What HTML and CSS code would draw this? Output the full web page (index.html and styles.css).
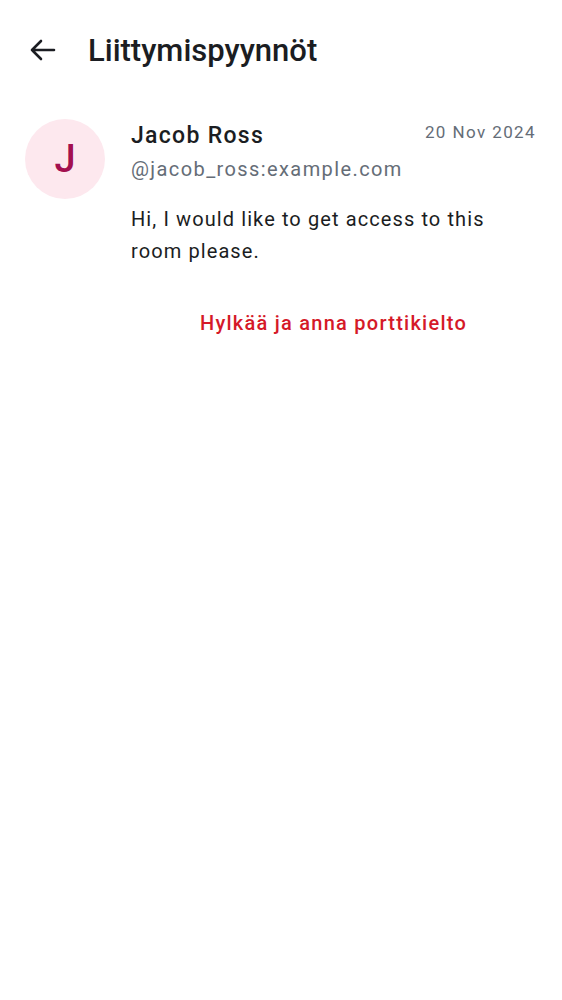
FILE: index.html
```html
<!DOCTYPE html>
<html>
<head>
<meta charset="utf-8">
<link rel="stylesheet" href="styles.css">
</head>
<body>
<header class="topbar">
  <button class="back" aria-label="Back">
    <svg width="30" height="30" viewBox="0 0 30 30"><path d="M26 15H4M4 15l9-9M4 15l9 9" fill="none" stroke="#1b1d22" stroke-width="2.6" stroke-linecap="round" stroke-linejoin="round"/></svg>
  </button>
  <h1 class="title">Liittymispyynnöt</h1>
</header>
<main class="request">
  <div class="avatar">J</div>
  <div class="content">
    <div class="head">
      <div class="names">
        <div class="name">Jacob Ross</div>
        <div class="handle">@jacob_ross:example.com</div>
      </div>
      <div class="date">20 Nov 2024</div>
    </div>
    <p class="message">Hi, I would like to get access to this room please.</p>
    <div class="actions"><button class="ban">Hylkää ja anna porttikielto</button></div>
  </div>
</main>
</body>
</html>
```
FILE: styles.css
```css
html, body { margin: 0; padding: 0; background: #fff; }
body { font-family: Roboto, "Noto Sans", sans-serif; color: #1b1d22; }
.topbar { display: flex; align-items: center; height: 100px; padding-left: 28px; }
.back { background: none; border: 0; padding: 0; width: 30px; height: 30px; display: flex; }
.title { margin: 0 0 0 30px; font-size: 31px; font-weight: 500; letter-spacing: 0; }
.request { display: flex; padding: 19px 26px 0 25px; gap: 26px; }
.avatar { flex: none; width: 80px; height: 80px; border-radius: 50%; background: #fde8ee; color: #a3104f; font-size: 38px; font-weight: 500; display: flex; align-items: center; justify-content: center; }
.content { flex: 1; }
.head { display: flex; justify-content: space-between; align-items: flex-start; }
.name { font-size: 23px; font-weight: 500; line-height: 32px; letter-spacing: 1.3px; margin-top: 1px; }
.handle { font-size: 20px; color: #656d77; line-height: 32px; margin-top: 1px; letter-spacing: 1.4px; }
.date { font-size: 17px; color: #656d77; line-height: 24px; padding-top: 1px; letter-spacing: 1.4px; }
.message { margin: 18px 0 0; font-size: 20px; line-height: 32px; letter-spacing: 1.1px; padding-right: 40px; }
.actions { display: flex; justify-content: center; margin-top: 42px; }
.ban { background: none; border: 0; padding: 0; font-family: inherit; font-size: 20px; font-weight: 500; color: #d51928; letter-spacing: 1.25px; line-height: 28px; }
```
